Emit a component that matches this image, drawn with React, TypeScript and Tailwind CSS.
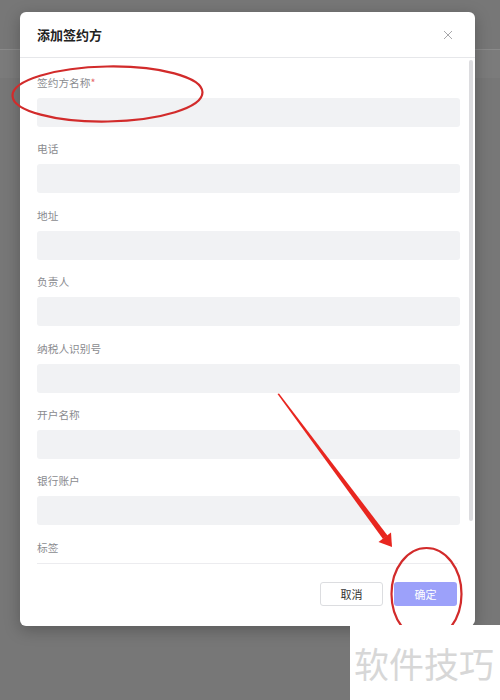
const fields = [
  { label: "签约方名称", required: true },
  { label: "电话" },
  { label: "地址" },
  { label: "负责人" },
  { label: "纳税人识别号" },
  { label: "开户名称" },
  { label: "银行账户" },
];

function Field({ label, required }: { label: string; required?: boolean }) {
  return (
    <div className="flex flex-col">
      <div className="h-4 text-[10.7px] leading-4 text-[#8a8b8f]">
        {label}
        {required && <span className="text-[#e66a6a]">*</span>}
      </div>
      <div className="mt-[7px] h-[29px] rounded-[3px] bg-[#f1f2f4]" />
    </div>
  );
}

export default function App() {
  return (
    <div
      className="relative h-[700px] w-[500px] overflow-hidden bg-[linear-gradient(to_bottom,#777_0,#777_49px,#8a8a8a_49px,#8a8a8a_50px,#7b7b7b_50px,#7b7b7b_78px,#777_78px)] pl-[20px] pt-[12px]"
      style={{ fontFamily: '"Noto Sans CJK SC", "Noto Sans", sans-serif' }}
    >
      {/* modal */}
      <div className="flex h-[614px] w-[455px] flex-col overflow-hidden rounded-[6px] bg-white shadow-[0_4px_16px_rgba(0,0,0,0.25)]">
        <div className="flex h-[46px] shrink-0 items-center justify-between border-b border-[#e6e7ea] pl-[17px] pr-[22px]">
          <span className="text-[13px] font-bold text-[#222]">添加签约方</span>
          <svg width="10" height="10" viewBox="0 0 10 10">
            <path d="M1 1L9 9M9 1L1 9" stroke="#a8a8ab" strokeWidth="1" />
          </svg>
        </div>

        <div className="flex min-h-0 flex-1 overflow-hidden">
          <div className="flex flex-1 flex-col gap-[14.4px] pl-[17px] pr-[9px] pt-[17px]">
            {fields.map((f) => (
              <Field key={f.label} label={f.label} required={f.required} />
            ))}
            <div className="h-4 text-[10.7px] leading-4 text-[#8a8b8f]">标签</div>
          </div>
          <div className="mr-[2px] pt-[2px]">
            <div className="h-[461px] w-[4px] rounded-full bg-[#dcdcdf]" />
          </div>
        </div>

        <div className="mx-[17px] h-px shrink-0 bg-[#ececef]" />
        <div className="flex h-[62px] shrink-0 items-start justify-end gap-[11px] pr-[18px] pt-[18px]">
          <button className="h-[24px] w-[63px] rounded-[3px] border border-[#dcdde0] bg-white text-[11px] text-[#333]">
            取消
          </button>
          <button className="h-[24px] w-[63px] rounded-[3px] bg-[#9ca1fa] text-[11px] text-white">
            确定
          </button>
        </div>
      </div>

      {/* red annotations */}
      <svg className="pointer-events-none absolute left-0 top-0" width="500" height="700" viewBox="0 0 500 700">
        <ellipse cx="107.5" cy="94" rx="95" ry="27.5" fill="none" stroke="#d22b2b" strokeWidth="2.2" transform="rotate(-1 107.5 94)" />
        <ellipse cx="426.5" cy="594" rx="35" ry="46" fill="none" stroke="#d22b2b" strokeWidth="2.2" />
        <polygon points="277.5,394 279,393.5 387.5,535.5 383,539" fill="#e8261f" />
        <polygon points="378.5,542 391,532.5 392,547" fill="#e8261f" />
      </svg>

      {/* watermark */}
      <div className="absolute bottom-0 right-0 flex h-[75px] w-[150px] items-center bg-white pl-[4px]">
        <span className="whitespace-nowrap text-[35px] leading-none tracking-[0px] text-[#d7d7d7]">软件技巧</span>
      </div>
    </div>
  );
}
